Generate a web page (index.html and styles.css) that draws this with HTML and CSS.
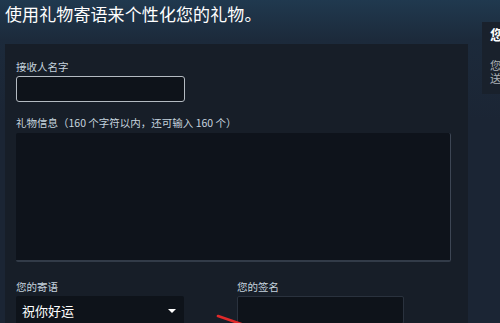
FILE: index.html
```html
<!DOCTYPE html>
<html lang="zh-CN">
<head>
    <meta charset="UTF-8">
    <meta name="viewport" content="width=device-width, initial-scale=1.0">
    <title>礼物寄语</title>
    <link rel="stylesheet" href="styles.css">
</head>
<body>
    <div class="page">
        <div class="content">
            <h1>使用礼物寄语来个性化您的礼物。</h1>
            <div class="panel">
                <div class="form-group">
                    <label for="recipient">接收人名字</label>
                    <input type="text" id="recipient" class="name-input">
                </div>
                <div class="form-group message-group">
                    <label for="message">礼物信息（160 个字符以内，还可输入 160 个）</label>
                    <textarea id="message"></textarea>
                </div>
                <div class="form-row">
                    <div class="form-col">
                        <label>您的寄语</label>
                        <div class="select">
                            <span>祝你好运</span>
                            <span class="caret"></span>
                        </div>
                    </div>
                    <div class="form-col sign-col">
                        <label for="signature">您的签名</label>
                        <input type="text" id="signature" class="sign-input">
                    </div>
                </div>
            </div>
        </div>
        <div class="side">
            <div class="side-title">您</div>
            <div class="side-text">
                <div>您</div>
                <div>送</div>
            </div>
        </div>
    </div>
    <svg class="arrow" width="40" height="20" viewBox="0 0 40 20">
        <path d="M2 3 L34 14" stroke="#e0292a" stroke-width="2.6" stroke-linecap="round" fill="none"/>
    </svg>
</body>
</html>
```
FILE: styles.css
```css
html {
    overflow: hidden;
}
body {
    margin: 0;
    height: 323px;
    overflow: hidden;
    font-family: "Noto Sans CJK SC", "Noto Sans", Arial, sans-serif;
    background: linear-gradient(to bottom, #20394f 0px, #1c2a3b 40px, #1b2534 120px);
    color: #c6d4df;
    position: relative;
}
.page {
    display: flex;
    padding-left: 5px;
}
.content {
    flex: 0 0 463px;
    width: 463px;
}
h1 {
    margin: 0 0 16px 0;
    font-size: 17px;
    line-height: 28px;
    font-weight: normal;
    color: #ffffff;
    letter-spacing: 0.1px;
}
.panel {
    background-color: #171e28;
    padding: 16px 11px 0 11px;
    height: 263px;
}
.form-group {
    margin-bottom: 14px;
}
.message-group {
    margin-bottom: 18px;
}
label {
    display: block;
    font-size: 10.5px;
    line-height: 14px;
    margin-bottom: 2px;
    color: #c6d4df;
}
.message-group label {
    margin-bottom: 3px;
}
.name-input {
    display: block;
    width: 169px;
    height: 26px;
    box-sizing: border-box;
    background-color: #0e131a;
    border: 1px solid #b4bbc2;
    border-radius: 3px;
    outline: none;
}
textarea {
    display: block;
    width: 435px;
    height: 129px;
    box-sizing: border-box;
    background-color: #0e131b;
    border: none;
    border-right: 1px solid #3d4654;
    border-bottom: 2px solid #323b48;
    border-radius: 2px;
    resize: none;
    outline: none;
}
.form-row {
    display: flex;
}
.form-col {
    width: 168px;
}
.sign-col {
    margin-left: 53px;
    width: 167px;
}
.select {
    display: flex;
    align-items: center;
    justify-content: space-between;
    height: 28px;
    padding: 0 8px 0 6px;
    box-sizing: border-box;
    background-color: #0e131a;
    border-radius: 2px;
    color: #ffffff;
    font-size: 13px;
}
.caret {
    width: 0;
    height: 0;
    border-left: 4px solid transparent;
    border-right: 4px solid transparent;
    border-top: 4px solid #ffffff;
    margin-top: 2px;
}
.sign-input {
    display: block;
    width: 167px;
    height: 28px;
    box-sizing: border-box;
    background-color: #0e131a;
    border: 1px solid #2a323e;
    border-radius: 2px;
    outline: none;
}
.side {
    flex: 0 0 60px;
    margin-left: 14px;
    margin-top: 22px;
    height: 72px;
    background-color: #19212c;
    padding: 3px 0 0 8px;
    box-sizing: border-box;
}
.side-title {
    font-size: 14px;
    font-weight: bold;
    color: #ffffff;
    line-height: 18px;
}
.side-text {
    margin-top: 16px;
    font-size: 11px;
    line-height: 13px;
    color: #acb2b8;
}
.arrow {
    position: absolute;
    left: 216px;
    top: 313px;
}
```
